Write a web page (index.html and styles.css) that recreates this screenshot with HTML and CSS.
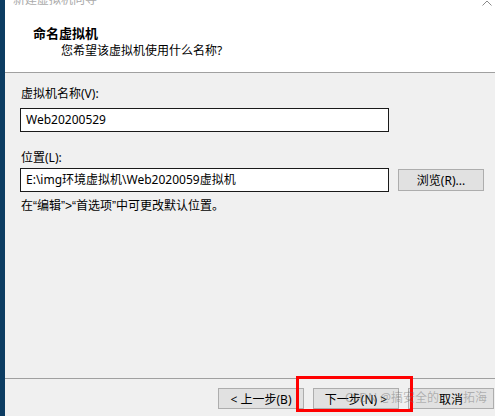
FILE: index.html
```html
<!DOCTYPE html>
<html lang="zh-CN">
<head>
  <meta charset="UTF-8" />
  <title>新建虚拟机向导</title>
  <link rel="stylesheet" href="styles.css">
</head>
<body>
  <div class="edge"></div>
  <div class="wizard">
    <div class="header">
      <div class="titlebar">
        <span class="title">新建虚拟机向导</span>
        <svg class="chevron" width="10" height="6" viewBox="0 0 10 6"><path d="M0.5 5.5 L5 1 L9.5 5.5" fill="none" stroke="#8a8a8a" stroke-width="1"/></svg>
      </div>
      <div class="step-title">命名虚拟机</div>
      <div class="step-desc">您希望该虚拟机使用什么名称?</div>
    </div>
    <div class="content">
      <div class="label">虚拟机名称(V):</div>
      <div class="field">Web20200529</div>
      <div class="label second">位置(L):</div>
      <div class="row">
        <div class="field">E:\img环境虚拟机\Web2020059虚拟机</div>
        <button class="btn">浏览(R)...</button>
      </div>
      <div class="hint">在<span class="q">“</span>编辑<span class="q">”&gt;“</span>首选项<span class="q">”</span>中可更改默认位置。</div>
    </div>
    <div class="footer">
      <button class="btn">&lt; 上一步(B)</button>
      <button class="btn">下一步(N) &gt;</button>
      <button class="btn">取消</button>
    </div>
  </div>
  <div class="mark"></div>
  <div class="watermark">CSDN @搞安全的　　拓海</div>
</body>
</html>
```

FILE: styles.css
```css
* {
  box-sizing: border-box;
}
body {
  margin: 0;
  height: 416px;
  overflow: hidden;
  display: flex;
  background: #f0f0f0;
  font-family: "Noto Sans", "Noto Sans CJK SC", sans-serif;
  font-size: 12px;
  color: #000;
  position: relative;
  text-autospace: no-autospace;
}
.edge {
  width: 5px;
  background: #0c3c62;
}
.wizard {
  flex: 1;
  display: flex;
  flex-direction: column;
}
.header {
  height: 73px;
  background: #fff;
  border-bottom: 1px solid #a0a0a0;
}
.titlebar {
  height: 7px;
  overflow: hidden;
  display: flex;
  align-items: flex-end;
  justify-content: space-between;
  padding: 0 3px 0 8px;
}
.title {
  color: #ababab;
  line-height: 14px;
  flex-shrink: 0;
}
.chevron {
  align-self: flex-start;
}
.step-title {
  margin-top: 18px;
  padding-left: 28px;
  font-size: 13px;
  font-weight: bold;
  line-height: 16px;
}
.step-desc {
  margin-top: 2px;
  padding-left: 56px;
  line-height: 16px;
}
.content {
  flex: 1;
  padding: 13px 0 0 15px;
}
.label {
  line-height: 16px;
  padding-left: 1px;
  margin-bottom: 6px;
}
.label.second {
  margin-top: 18px;
  margin-bottom: 2px;
}
.field {
  width: 369px;
  height: 24px;
  border: 1px solid #1a1a1a;
  background: #fff;
  padding-left: 5px;
  line-height: 22px;
  white-space: nowrap;
}
.row {
  display: flex;
  align-items: center;
  gap: 9px;
}
.btn {
  width: 86px;
  height: 22px;
  padding: 0;
  background: #e1e1e1;
  border: 1px solid #adadad;
  font-family: inherit;
  font-size: 12px;
  color: #000;
}
.hint {
  margin-top: 6px;
  padding-left: 1px;
  line-height: 16px;
}
.hint .q {
  font-family: "Liberation Sans", sans-serif;
}
.footer {
  height: 38px;
  border-top: 1px solid #a0a0a0;
  display: flex;
  justify-content: flex-end;
  gap: 9px;
  padding: 9px 1px 0 0;
}
.footer .btn {
  height: 21px;
}
.mark {
  position: absolute;
  left: 296px;
  top: 376px;
  width: 117px;
  height: 36px;
  border: 3px solid #f00;
}
.watermark {
  position: absolute;
  left: 345px;
  top: 390px;
  line-height: 16px;
  font-size: 12px;
  color: rgba(110, 110, 110, 0.45);
  white-space: nowrap;
}
```
